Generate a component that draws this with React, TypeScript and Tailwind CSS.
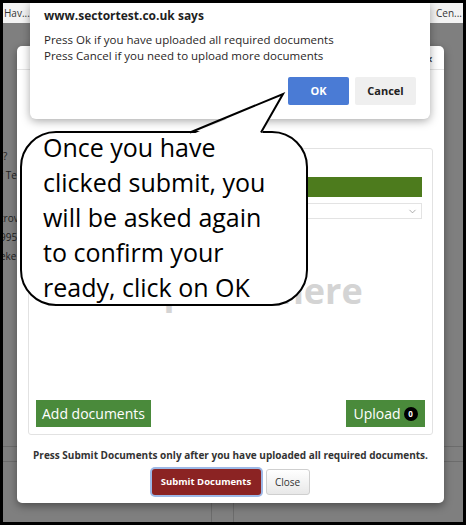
import { ChevronDown } from 'lucide-react'

const sans = { fontFamily: '"Open Sans", "Noto Sans", sans-serif' }

export default function App() {
  return (
    <div
      className="relative w-[466px] h-[525px] overflow-hidden border-[3px] border-black bg-[#7f7f7f]"
      style={sans}
    >
      {/* Page behind the overlay */}
      <div className="flex h-full flex-col">
        <div className="flex h-[20px] items-center justify-between bg-[#f3f3f3] px-[1px] text-[10px] text-[#333]">
          <span>Hav...</span>
          <span>Cen...</span>
        </div>
        <div className="flex-1 whitespace-nowrap pt-[124px] text-[10px] leading-[19px] text-[#222]">
          <div className="ml-[0px]">?</div>
          <div className="-ml-[4px]">r Te</div>
          <div className="-ml-[3px] mt-[24px]">trov</div>
          <div className="-ml-[3px]">995</div>
          <div className="-ml-[3px]">eke</div>
        </div>
        <div className="h-[76px] border-t border-[#6c6c6c]">
          <div className="mt-[14px] flex h-full border-t border-[#6c6c6c]">
            <div className="w-[209px] border-r border-[#6c6c6c]" />
            <div className="w-[22px] border-r border-[#6c6c6c]" />
          </div>
        </div>
      </div>

      {/* Modal */}
      <div className="absolute left-[14px] top-[43px] flex h-[457px] w-[427px] flex-col rounded-[5px] bg-white shadow-[0_3px_8px_rgba(0,0,0,0.4)]">
        <div className="flex h-[24px] items-end justify-end border-b border-[#e5e5e5] pr-[11px] text-[13px] font-bold text-[#444]">
          ×
        </div>
        <div className="mx-[11px] mt-[78px] flex h-[287px] flex-col rounded-[3px] border border-[#e2e2e2] px-[7px] pb-[7px] pt-[28px]">
          <div className="mx-[3px] h-[20px] bg-[#4d7b1d]" />
          <div className="mx-[3px] mt-[6px] flex h-[16px] items-center justify-end border border-[#e3e3e3] pr-[3px] text-[#888]">
            <ChevronDown size={11} strokeWidth={1.5} />
          </div>
          <div className="flex flex-1 items-center justify-center pb-[38px] text-[36px] font-bold text-[#d4d4d4]">
            Drop files here
          </div>
          <div className="flex items-center justify-between">
            <button className="h-[27px] w-[115px] bg-[#4a8a3b] text-[14px] text-white">
              Add documents
            </button>
            <button className="flex h-[27px] w-[79px] items-center justify-center gap-[3px] bg-[#4a8a3b] text-[14px] text-white">
              Upload
              <span className="flex h-[14px] w-[14px] items-center justify-center rounded-full bg-black text-[8px] font-bold">
                0
              </span>
            </button>
          </div>
        </div>
        <p className="mt-[13px] text-center text-[10px] font-bold text-[#333]">
          Press Submit Documents only after you have uploaded all required documents.
        </p>
        <div className="mt-[6px] flex justify-center gap-[5px]">
          <button className="h-[26px] w-[109px] rounded-[3px] bg-[#8b2323] text-[9.5px] font-bold text-white ring-2 ring-[#9db8e6]">
            Submit Documents
          </button>
          <button className="h-[26px] w-[44px] rounded-[3px] border border-[#cfcfcf] bg-gradient-to-b from-white to-[#e8e8e8] text-[10px] text-[#333]">
            Close
          </button>
        </div>
      </div>

      {/* Browser confirm dialog */}
      <div className="absolute left-[27px] top-0 h-[116px] w-[400px] rounded-b-[6px] bg-white px-[14px] shadow-[0_2px_10px_rgba(0,0,0,0.35)]">
        <div className="pt-[4px] text-[12px] font-bold text-[#1f1f1f]">www.sectortest.co.uk says</div>
        <div className="mt-[7px] text-[11.5px] leading-[16px] text-[#2a1f1f]">
          <div>Press Ok if you have uploaded all required documents</div>
          <div>Press Cancel if you need to upload more documents</div>
        </div>
        <div className="mt-[13px] flex justify-end gap-[6px]">
          <button className="h-[28px] w-[61px] rounded-[2px] bg-[#4a7bd5] text-[11px] font-bold text-white">
            OK
          </button>
          <button className="h-[28px] w-[61px] rounded-[2px] bg-[#efefef] text-[11px] font-bold text-[#222]">
            Cancel
          </button>
        </div>
      </div>

      {/* Speech bubble */}
      <div className="absolute left-[17px] top-[128px] h-[175px] w-[288px] rounded-[36px] border-2 border-black bg-white pl-[21px] text-[25px] leading-[35px] text-black">
        <div className="-mt-[3px]">
          <div>Once you have</div>
          <div>clicked submit, you</div>
          <div>will be asked again</div>
          <div>to confirm your</div>
          <div>ready, click on OK</div>
        </div>
      </div>
      <svg className="absolute left-[180px] top-[85px]" width="110" height="50" viewBox="0 0 110 50">
        <polygon points="8,47 100,6 78,47" fill="white" />
        <polyline points="7,44.5 100,6 78,44.5" fill="none" stroke="black" strokeWidth="2" strokeLinejoin="miter" />
      </svg>
    </div>
  )
}
